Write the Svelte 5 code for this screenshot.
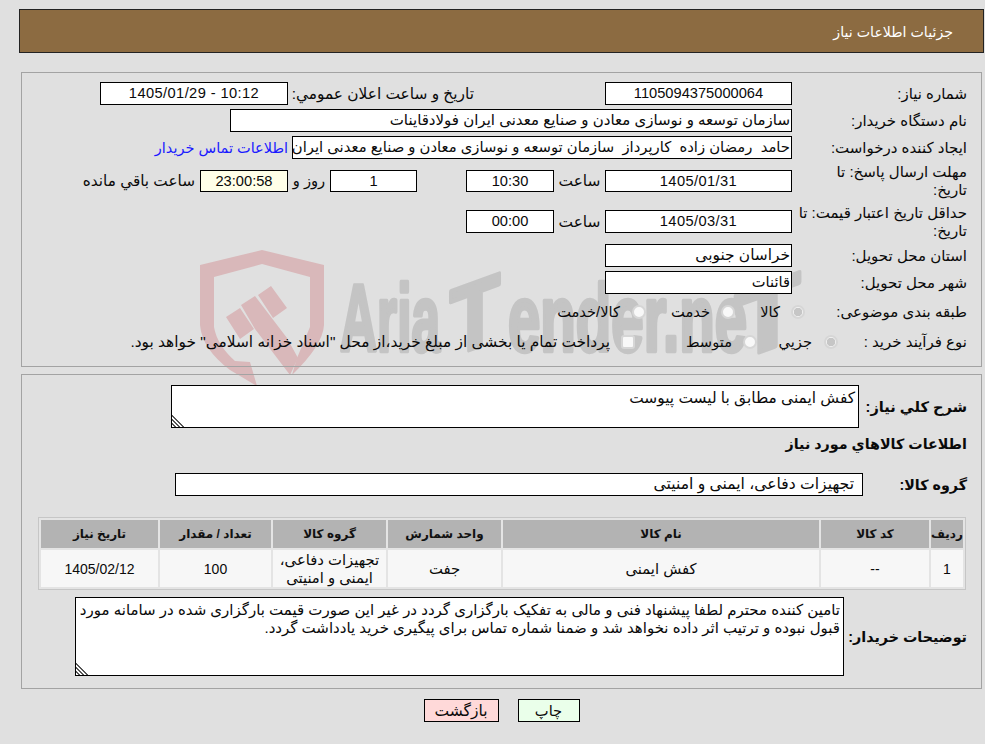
<script>
  const cols = ['ردیف', 'کد کالا', 'نام کالا', 'واحد شمارش', 'گروه کالا', 'تعداد / مقدار', 'تاریخ نیاز'];
</script>

<div class="page" dir="rtl">
  <header class="head">جزئیات اطلاعات نیاز</header>

  <svg class="mark" width="640" height="140" viewBox="0 0 640 140" aria-hidden="true">
    <g fill="#d9b8ba">
      <path fill-rule="evenodd" d="M1 16 L63 1 L125 16 L125 76 Q124 96 93 126 L98 109 L111 78 L111 28 L63 15 L15 28 L15 78 Q18 96 36 112 L51 113 L58 137 L31 121 Q3 100 1 76 Z"/>
      <path d="M27 68 L41 59 L55 80 L41 90 Z M42 56 L56 47 L88 89 L99 109 L91 126 L56 80 Z M59 46 L72 37 L88 59 L74 69 Z"/>
    </g>
    <g class="word" fill="#c4c4c4" stroke="#c4c4c4" stroke-width="4.5" stroke-linejoin="round">
      <text x="141" y="102" textLength="100" lengthAdjust="spacingAndGlyphs">Aria</text>
      <text transform="translate(251 108) skewY(-20)" x="0" y="0" textLength="50" lengthAdjust="spacingAndGlyphs">T</text>
      <text x="309" y="102" textLength="239" lengthAdjust="spacingAndGlyphs">ender.ne</text>
      <text transform="translate(536 112) skewY(-20)" x="0" y="0" textLength="65" lengthAdjust="spacingAndGlyphs">T</text>
    </g>
  </svg>

  <section class="card first">
    <div class="row">
      <div class="lab">شماره نیاز:</div>
      <div class="box main c">1105094375000064</div>
      <div class="pub">تاریخ و ساعت اعلان عمومي:</div>
      <div class="box w188 c date">1405/01/29 - 10:12</div>
    </div>
    <div class="row">
      <div class="lab">نام دستگاه خریدار:</div>
      <div class="box wide1 tx15">سازمان توسعه و نوسازی معادن و صنایع معدنی ایران فولادقاینات</div>
    </div>
    <div class="row">
      <div class="lab">ایجاد کننده درخواست:</div>
      <div class="box wide2">حامد&nbsp; رمضان زاده&nbsp; کارپرداز&nbsp; سازمان توسعه و نوسازی معادن و صنایع معدنی ایران</div>
      <a class="link" href="#top">اطلاعات تماس خریدار</a>
    </div>
    <div class="row">
      <div class="lab">مهلت ارسال پاسخ: تا<br />تاریخ:</div>
      <div class="box main c short date">1405/01/31</div>
      <div class="sa">ساعت</div>
      <div class="box w88 c short">10:30</div>
      <div class="box w87 c short day">1</div>
      <div class="rz">روز و</div>
      <div class="box w88 c short timer">23:00:58</div>
      <div class="rem">ساعت باقي مانده</div>
    </div>
    <div class="row tall">
      <div class="lab">حداقل تاریخ اعتبار قیمت: تا<br />تاریخ:</div>
      <div class="box main c date">1405/03/31</div>
      <div class="sa">ساعت</div>
      <div class="box w88 c">00:00</div>
    </div>
    <div class="row">
      <div class="lab">استان محل تحویل:</div>
      <div class="box main tx154">خراسان جنوبی</div>
    </div>
    <div class="row">
      <div class="lab">شهر محل تحویل:</div>
      <div class="box main">قائنات</div>
    </div>
    <div class="row opts o1">
      <div class="lab">طبقه بندی موضوعی:</div>
      <span class="radio on r1"></span><span class="opt t1">کالا</span>
      <span class="radio"></span><span class="opt t2">خدمت</span>
      <span class="radio"></span><span class="opt t3">کالا/خدمت</span>
    </div>
    <div class="row opts">
      <div class="lab">نوع فرآیند خرید :</div>
      <span class="radio on r4"></span><span class="opt t4">جزيي</span>
      <span class="radio"></span><span class="opt t5">متوسط</span>
      <span class="check"></span><span class="opt long">پرداخت تمام یا بخشی از مبلغ خرید،از محل "اسناد خزانه اسلامی" خواهد بود.</span>
    </div>
  </section>

  <section class="card second">
    <div class="row need">
      <div class="blab">شرح کلي نیاز:</div>
      <textarea class="area small" readonly>کفش ایمنی مطابق با لیست پیوست</textarea>
    </div>
    <h2 class="sub">اطلاعات کالاهاي مورد نیاز</h2>
    <div class="row grp">
      <div class="blab">گروه کالا:</div>
      <div class="box gbox">تجهیزات دفاعی، ایمنی و امنیتی</div>
    </div>
    <table>
      <thead>
        <tr>{#each cols as c}<th>{c}</th>{/each}</tr>
      </thead>
      <tbody>
        <tr>
          <td class="num">1</td>
          <td class="num">--</td>
          <td>کفش ایمنی</td>
          <td>جفت</td>
          <td>تجهیزات دفاعی، ایمنی و امنیتی</td>
          <td class="num">100</td>
          <td class="num">1405/02/12</td>
        </tr>
      </tbody>
    </table>
    <div class="row note">
      <div class="blab">توضیحات خریدار:</div>
      <textarea class="area big" readonly>تامین کننده محترم لطفا پیشنهاد فنی و مالی به تفکیک بارگزاری گردد در غیر این صورت قیمت بارگزاری شده در سامانه مورد قبول نبوده و ترتیب اثر داده نخواهد شد و ضمنا شماره تماس برای پیگیری خرید یادداشت گردد.</textarea>
    </div>
  </section>

  <div class="actions">
    <button class="print">چاپ</button>
    <button class="back">بازگشت</button>
  </div>
</div>

<style>
  :global(body) { margin: 0; background: #e0e0e0; }
  .page {
    position: relative;
    height: 744px;
    box-sizing: border-box;
    padding: 9px 1px 0 19px;
    font-family: "Liberation Sans", "DejaVu Sans", sans-serif;
    font-size: 14.67px;
    line-height: 18px;
    color: #0a0a0a;
    overflow: hidden;
  }
  .head {
    height: 44px;
    box-sizing: border-box;
    border: 1px solid #222;
    background: #8c6b41;
    color: #fff;
    padding: 13px 30px 0 0;
    font-size: 14.2px;
  }
  .mark { position: absolute; left: 199px; top: 249px; z-index: 0; direction: ltr; }
  .word text { font-family: "Liberation Sans", sans-serif; font-weight: 700; font-size: 95px; }
  .card {
    position: relative;
    z-index: 1;
    box-sizing: border-box;
    margin: 0 2px 0 2px;
    border: 1px solid #a3a3a3;
    width: 961px;
  }
  .first { margin-top: 19px; height: 295px; padding: 9px 14px 0 0; display: flex; flex-direction: column; gap: 4px; }
  .second { margin-top: 7px; height: 315px; padding: 10px 14px 0 0; }
  .row { display: flex; align-items: center; }
  .tall { min-height: 37px; }
  .lab { width: 175px; flex: none; box-sizing: border-box; font-size: 15px; }
  .box {
    height: 23px;
    box-sizing: border-box;
    border: 1px solid #000;
    background: #fff;
    padding: 1px 1px 0;
    white-space: nowrap;
    overflow: hidden;
    flex: none;
  }
  .c { text-align: center; direction: ltr; }
  .date { letter-spacing: .4px; }
  .tx15 { font-size: 15px; }
  .tx154 { font-size: 15.4px; }
  .main { width: 187px; }
  .short { height: 22px; }
  .w188 { width: 188px; }
  .w88 { width: 88px; }
  .w87 { width: 87px; }
  .wide1 { width: 562px; }
  .wide2 { width: 500px; font-size: 14.8px; }
  .pub { margin-right: 131px; width: 186px; white-space: nowrap; font-size: 15.4px; }
  .link { margin-right: 4px; color: #1a1aff; text-decoration: none; white-space: nowrap; font-size: 14.5px; }
  .sa { width: 51px; flex: none; text-align: center; font-size: 15.4px; }
  .day { margin-right: 49px; }
  .rz { width: 42px; flex: none; text-align: center; }
  .timer { background: #ffffe8; }
  .rem { margin-right: 5px; white-space: nowrap; font-size: 15.3px; }
  .opts { height: 26px; }
  .o1 { height: 27px; }
  .radio, .check {
    flex: none;
    box-sizing: border-box;
    width: 14px;
    height: 14px;
    border: 2px solid #d6d6d6;
    border-radius: 50%;
    background: #f8f8f8;
  }
  .check { border-radius: 3px; }
  .radio.on { background: radial-gradient(circle, #c6c6c6 0 4px, #f0f0f0 4.5px); }
  .opt { margin-right: 11px; white-space: nowrap; flex: none; }
  .long { font-size: 15.4px; }
  .r1 { margin-right: -13px; }
  .r4 { margin-right: -46px; }
  .t1 { width: 45px; }
  .t2 { width: 64px; }
  .t3 { margin-right: 12px; }
  .t4 { width: 55px; margin-right: 12px; }
  .t5 { width: 97px; }
  .blab { font-weight: 700; font-size: 14.3px; white-space: nowrap; flex: none; }
  .need .blab { width: 108px; font-size: 14.6px; }
  .grp .blab { width: 104px; }
  .note .blab { width: 123px; }
  .area {
    display: block;
    box-sizing: border-box;
    border: 1px solid #000;
    background: #fff;
    font: inherit;
    color: inherit;
    padding: 3px;
    margin: 0;
    outline: none;
    overflow: hidden;
    resize: both;
  }
  .area::-webkit-resizer {
    background: linear-gradient(45deg, #fff 0 7%, #555 7% 14%, #fff 14% 21%, #555 21% 28%, #fff 28% 35%, #555 35% 42%, #fff 42%);
  }
  .small { width: 688px; height: 43px; font-size: 15.4px; }
  .big { width: 769px; height: 79px; font-size: 15px; }
  .sub { margin: 7px 0 0; font-size: 14.3px; font-weight: 700; line-height: 18px; }
  .grp { margin-top: 20px; }
  .gbox { width: 688px; padding-right: 8px; font-size: 15.6px; }
  table {
    margin: 21px 1px 0 0;
    width: 928px;
    table-layout: fixed;
    border-collapse: separate;
    border-spacing: 2px;
    border: 1px solid #c6c6c6;
    background: #e4e4e4;
    box-sizing: border-box;
  }
  th {
    background: #b3b3b3;
    height: 28px;
    padding: 0;
    font-size: 12px;
    font-weight: 700;
    color: #111;
  }
  td {
    background: #f7f7f7;
    height: 37px;
    padding: 0;
    text-align: center;
    font-size: 14.8px;
  }
  td.num { font-size: 14px; }
  th:nth-child(1) { width: 32px; }
  th:nth-child(2) { width: 108px; }
  th:nth-child(3) { width: 316px; }
  th:nth-child(4) { width: 113px; }
  th:nth-child(5) { width: 113px; }
  th:nth-child(6) { width: 111px; }
  th:nth-child(7) { width: 117px; }
  .note { margin-top: 7px; }
  .actions {
    position: relative;
    z-index: 1;
    display: flex;
    justify-content: center;
    gap: 19px;
    margin-top: 10px;
    width: 965px;
    box-sizing: border-box;
  }
  button {
    height: 23px;
    box-sizing: border-box;
    border: 1px solid #000;
    font: inherit;
    color: inherit;
    padding: 0;
  }
  .print { width: 62px; background: #eaffea; }
  .back { width: 75px; background: #ffd9d9; font-size: 15.5px; }
</style>
